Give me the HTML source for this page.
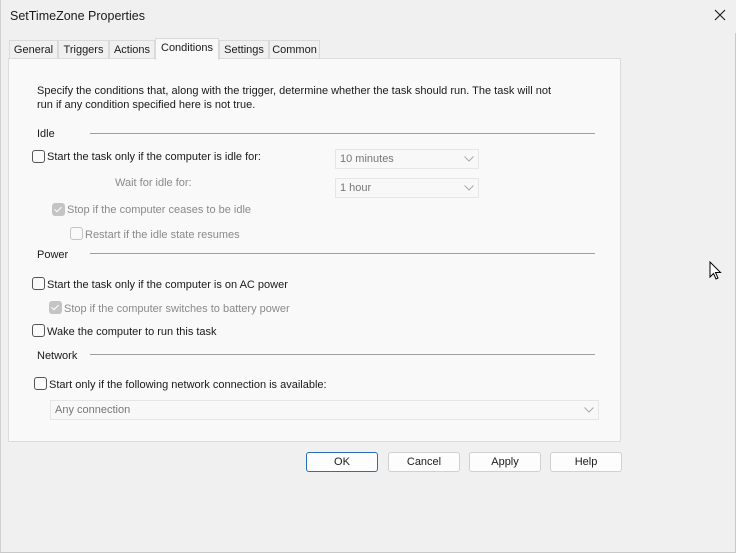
<!DOCTYPE html>
<html><head><style>
*{box-sizing:border-box;margin:0;padding:0}
body{width:736px;height:553px;background:#f0f0f0;font-family:"Liberation Sans",sans-serif;font-size:11px;color:#1a1a1a;position:relative;overflow:hidden}
.a{position:absolute;white-space:nowrap}
.tab{position:absolute;top:40px;height:19px;border:1px solid #dadada;border-bottom:none;background:#f0f0f0;text-align:center;line-height:19px;font-size:11px}
.panel{position:absolute;left:8px;top:58px;width:613px;height:384px;background:#f9f9f9;border:1px solid #dcdcdc}
.cb{position:absolute;width:13px;height:13px;border:1px solid #555;border-radius:3px;background:#fafafa}
.cbd{position:absolute;width:13px;height:13px;border-radius:3px;background:#c4c4c4}
.cbd::after{content:"";position:absolute;left:4px;top:2px;width:3px;height:6px;border:solid #fff;border-width:0 1.3px 1.3px 0;transform:rotate(45deg)}
.cbe{position:absolute;width:13px;height:13px;border:1px solid #c4c4c4;border-radius:3px}
.line{position:absolute;height:1px;background:#a0a0a0}
.dd{position:absolute;height:20px;border:1px solid #e6e6e6;background:#f8f8f8;color:#777;padding-left:4px;line-height:19px}
.dd svg{position:absolute;right:4px;top:6px}
.g{color:#8a8a8a}
.btn{position:absolute;top:452px;height:20px;width:72px;border:1px solid #d0d0d0;border-radius:3px;background:#fdfdfd;text-align:center;line-height:19px}
</style></head><body>
<div class="a" style="left:10px;top:9px;font-size:12.5px">SetTimeZone Properties</div>
<svg class="a" style="left:714px;top:9px" width="12" height="12"><path d="M1 1L11 11M11 1L1 11" stroke="#222" stroke-width="1.2"/></svg>
<div style="position:absolute;left:0;top:0;width:1px;height:553px;background:#d0d0d0"></div>
<div style="position:absolute;left:735px;top:33px;width:1px;height:520px;background:#c8c8c8"></div>
<div style="position:absolute;left:0;top:552px;width:736px;height:1px;background:#c8c8c8"></div>
<div class="tab" style="left:9px;width:49px">General</div>
<div class="tab" style="left:58px;width:51px">Triggers</div>
<div class="tab" style="left:109px;width:46px">Actions</div>
<div class="tab" style="left:219px;width:50px">Settings</div>
<div class="tab" style="left:269px;width:51px">Common</div>
<div class="panel"></div>
<div class="tab" style="left:155px;top:38px;width:64px;height:22px;background:#f9f9f9;line-height:19px;z-index:2">Conditions</div>
<div class="a" style="left:37px;top:84px;line-height:14px">Specify the conditions that, along with the trigger, determine whether the task should run. The task will not<br>run if any condition specified here is not true.</div>
<div class="a" style="left:37px;top:128px">Idle</div><div class="line" style="left:90px;top:133px;width:505px"></div>
<div class="cb" style="left:32px;top:150px"></div><div class="a" style="left:47px;top:151px">Start the task only if the computer is idle for:</div>
<div class="dd" style="left:335px;top:149px;width:144px">10 minutes<svg width="10" height="6"><path d="M0.5 0.5L5 5L9.5 0.5" fill="none" stroke="#aaa"/></svg></div>
<div class="a g" style="left:115px;top:177px">Wait for idle for:</div>
<div class="dd" style="left:335px;top:178px;width:144px">1 hour<svg width="10" height="6"><path d="M0.5 0.5L5 5L9.5 0.5" fill="none" stroke="#aaa"/></svg></div>
<div class="cbd" style="left:52px;top:203px"></div><div class="a g" style="left:67px;top:204px">Stop if the computer ceases to be idle</div>
<div class="cbe" style="left:70px;top:227px"></div><div class="a g" style="left:85px;top:229px">Restart if the idle state resumes</div>
<div class="a" style="left:37px;top:249px">Power</div><div class="line" style="left:90px;top:253px;width:505px"></div>
<div class="cb" style="left:32px;top:277px"></div><div class="a" style="left:47px;top:279px">Start the task only if the computer is on AC power</div>
<div class="cbd" style="left:49px;top:301px"></div><div class="a g" style="left:64px;top:303px">Stop if the computer switches to battery power</div>
<div class="cb" style="left:32px;top:324px"></div><div class="a" style="left:47px;top:326px">Wake the computer to run this task</div>
<div class="a" style="left:37px;top:350px">Network</div><div class="line" style="left:90px;top:354px;width:505px"></div>
<div class="cb" style="left:34px;top:377px"></div><div class="a" style="left:49px;top:379px">Start only if the following network connection is available:</div>
<div class="dd" style="left:50px;top:400px;width:549px">Any connection<svg width="10" height="6"><path d="M0.5 0.5L5 5L9.5 0.5" fill="none" stroke="#aaa"/></svg></div>
<div class="btn" style="left:306px;border:1px solid #2a6fb0">OK</div>
<div class="btn" style="left:388px">Cancel</div>
<div class="btn" style="left:469px">Apply</div>
<div class="btn" style="left:550px">Help</div>
<svg class="a" style="left:709px;top:261px" width="13" height="20"><path d="M1 1L1 16L4.5 12.5L7 18L9 17L6.5 11.5L11.5 11.5Z" fill="#fff" stroke="#000" stroke-width="1"/></svg>
</body></html>
